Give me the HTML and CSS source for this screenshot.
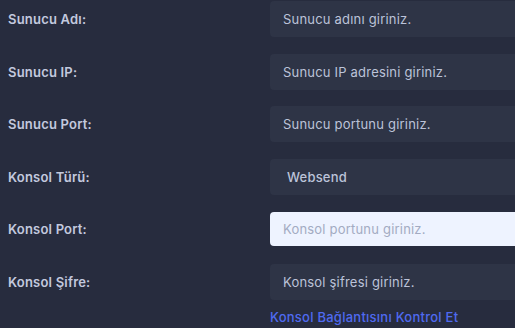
FILE: index.html
```html
<!DOCTYPE html>
<html lang="tr">

<head>
    <meta charset="UTF-8">
    <meta name="viewport" content="width=device-width, initial-scale=1.0">
    <title>Sunucu Ayarları</title>
    <link rel="stylesheet" href="styles.css">
</head>

<body>
    <form class="server-form">
        <div class="form-row">
            <label>Sunucu Adı:</label>
            <input type="text" class="field" placeholder="Sunucu adını giriniz.">
        </div>
        <div class="form-row">
            <label>Sunucu IP:</label>
            <input type="text" class="field" placeholder="Sunucu IP adresini giriniz.">
        </div>
        <div class="form-row">
            <label>Sunucu Port:</label>
            <input type="text" class="field" placeholder="Sunucu portunu giriniz.">
        </div>
        <div class="form-row">
            <label>Konsol Türü:</label>
            <div class="field select">Websend</div>
        </div>
        <div class="form-row">
            <label>Konsol Port:</label>
            <input type="text" class="field focused" placeholder="Konsol portunu giriniz.">
        </div>
        <div class="form-row">
            <label>Konsol Şifre:</label>
            <input type="text" class="field" placeholder="Konsol şifresi giriniz.">
        </div>
        <div class="form-row">
            <span></span>
            <a href="#" class="check-link">Konsol Bağlantısını Kontrol Et</a>
        </div>
    </form>
</body>

</html>
```

FILE: styles.css
```css
* {
    margin: 0;
    padding: 0;
    box-sizing: border-box;
    font-family: Inter, "Noto Sans", sans-serif;
}

html,
body {
    background-color: #272c3e;
    overflow: hidden;
}

.server-form {
    width: 100%;
    padding: 1px 0 0 8px;
    display: flex;
    flex-direction: column;
    gap: 16.5px;
}

.form-row {
    display: grid;
    grid-template-columns: 262px 1fr;
    align-items: center;
}

.form-row label {
    color: #c3c9de;
    font-size: 13px;
    font-weight: 600;
    letter-spacing: 0.2px;
}

.field {
    width: 100%;
    height: 36px;
    border: none;
    outline: none;
    border-radius: 4px 0 0 4px;
    background-color: #2e3446;
    color: #bcc3d9;
    font-size: 13px;
    letter-spacing: 0.2px;
    padding: 0 13px;
}

.field::placeholder {
    color: #bcc3d9;
}

.select {
    display: flex;
    align-items: center;
    padding-left: 17px;
    font-weight: 500;
}

.focused {
    height: 34px;
    margin: 1px 0;
    background-color: #eef3ff;
}

.focused::placeholder {
    color: #a3abc2;
}

.check-link {
    color: #4f6af0;
    font-size: 13px;
    font-weight: 500;
    letter-spacing: 0.25px;
    text-decoration: none;
    margin-top: -7px;
}
```
